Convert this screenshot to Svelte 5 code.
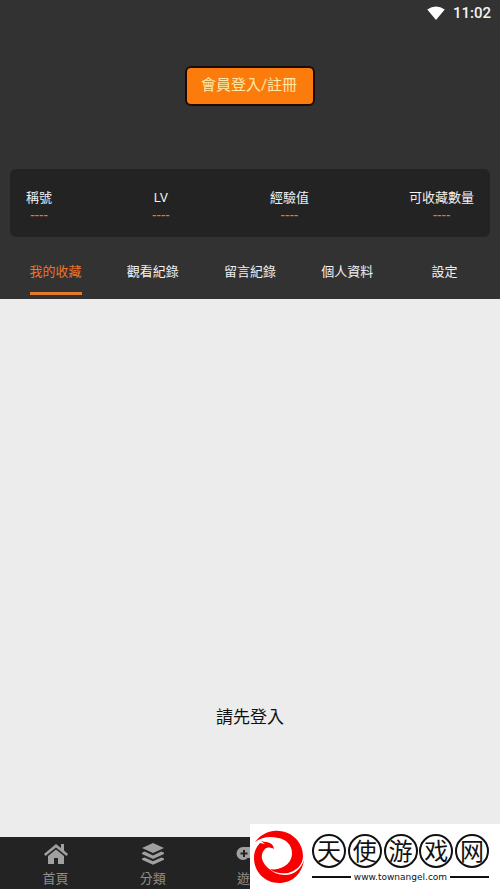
<script>
  const stats = ['稱號', 'LV', '經驗值', '可收藏數量'];
  const tabs = ['我的收藏', '觀看紀錄', '留言紀錄', '個人資料', '設定'];
  const nav = [
    { id: 'home', label: '首頁' },
    { id: 'category', label: '分類' },
    { id: 'game', label: '遊戲' },
  ];
  const brand = ['天', '使', '游', '戏', '网'];

  let active = $state('我的收藏');
</script>

<div class="page">
  <header class="top">
    <div class="status">
      <svg class="wifi" viewBox="0 0 20 16" aria-hidden="true">
        <path d="M0 4Q10-3 20 4L10 16Z" fill="#fff" />
      </svg>
      <span>11:02</span>
    </div>

    <button class="login" type="button">會員登入/註冊</button>

    <dl class="stats">
      {#each stats as stat}
        <div class="stat">
          <dt>{stat}</dt>
          <dd>----</dd>
        </div>
      {/each}
    </dl>

    <div class="tabs">
      {#each tabs as tab}
        <button class="tab" class:active={active === tab} type="button" onclick={() => (active = tab)}>
          <span>{tab}</span>
        </button>
      {/each}
    </div>
  </header>

  <main class="content">
    <p>請先登入</p>
  </main>

  <nav class="bottom-nav">
    {#each nav as item}
      <a class="nav-item" href="#{item.id}">
        <svg viewBox="0 0 24 22" aria-hidden="true">
          {#if item.id === 'home'}
            <path d="M12 1 0 11l1.500 2L12 4.500 22.500 13l1.500-2-4-3.400V1h-3v4.100Z" />
            <path d="M12 6.500 4 13v8h6v-6h4v6h6v-8Z" />
          {:else if item.id === 'category'}
            <path d="M12 0 1 5l11 5 11-5Z" />
            <path d="m1 9.800 2.600-1.200L12 12.400l8.400-3.800L23 9.800v1.200l-11 5-11-5Z" />
            <path d="m1 15.600 2.600-1.200L12 18.200l8.400-3.800 2.600 1.200v1.200l-11 5-11-5Z" />
          {:else}
            <path
              fill-rule="evenodd"
              d="M5 4h14a6.500 6.500 0 0 1 0 13q-3 0-4.500-2h-5Q8 17 5 17A6.500 6.500 0 0 1 5 4ZM5 7v2.500H2.500v2H5V14h2v-2.500h2.500v-2H7V7Zm10 4v3h3v-3Zm3-4v3h3V7Z"
            />
          {/if}
        </svg>
        <span>{item.label}</span>
      </a>
    {/each}
  </nav>

  <aside class="brand">
    <svg class="brand-logo" viewBox="0 0 50 54" aria-hidden="true">
      <g fill="#f80000">
        <path d="M1 12C8 3 17 0 25 1c14 1 24 12 24 25 0 9-7 15-15 17-7 1-14 0-18-4 4 1 9 0 13-2 6-3 9-8 9-14 0-8-6-14-14-15C16 6 8 7 1 12Z" />
        <path d="M6 13c-4 4-6 9-6 15 0 14 11 25 25 25 13 0 23-9 25-23-3 9-10 15-19 15-7 0-13-3-18-8-6-6-7-13-2-18 2-2 5-2 9 0-1-5-4-7-9-7l-4-1 4 3Z" />
      </g>
    </svg>
    <div class="brand-text">
      <div class="brand-name">
        {#each brand as char}
          <span>{char}</span>
        {/each}
      </div>
      <div class="brand-url">www.townangel.com</div>
    </div>
  </aside>
</div>

<style>
  :global(body) {
    margin: 0;
    font-family: Roboto, "Noto Sans CJK TC", sans-serif;
  }

  .page {
    position: relative;
    display: flex;
    flex-direction: column;
    min-height: 100vh;
    overflow: hidden;
    background: #ececec;
  }

  .top {
    display: flex;
    flex-direction: column;
    background: #323232;
    color: #f0f0f0;
  }

  .status {
    display: flex;
    align-items: center;
    justify-content: flex-end;
    gap: 8px;
    height: 26px;
    padding-right: 9px;
    font-size: 15px;
    font-weight: 500;
    color: #f4f4f4;
  }

  .wifi { width: 18px; height: 14px; }

  .login {
    align-self: center;
    width: 130px;
    height: 40px;
    margin: 40px 0 63px;
    padding: 0 2px 2px 0;
    border: 2px solid #1c0c08;
    border-radius: 6px;
    background: #fb7c0c;
    color: #ffe9a8;
    font: inherit;
    font-size: 15px;
    line-height: 20px;
  }

  .stats {
    display: flex;
    justify-content: space-between;
    height: 68px;
    box-sizing: border-box;
    margin: 0 10px;
    padding: 19px 16px 0;
    border-radius: 6px;
    background: #232323;
    font-size: 13px;
  }

  .stat { text-align: center; }
  .stat dt { line-height: 20px; }

  .stat dd {
    margin: 0;
    color: #f07818;
    font-weight: 500;
    line-height: 16px;
  }

  .tabs {
    display: grid;
    grid-template-columns: repeat(5, 1fr);
    padding: 0 7px;
    margin-top: 20px;
  }

  .tab {
    display: flex;
    justify-content: center;
    padding: 0 0 4px;
    border: 0;
    background: none;
    color: inherit;
    font: inherit;
    font-size: 13px;
  }

  .tab span {
    padding-bottom: 5px;
    border-bottom: 3px solid transparent;
    line-height: 30px;
  }

  .tab.active span {
    border-color: #e27a2c;
    color: #e8762a;
  }

  .content {
    display: flex;
    flex: 1;
    align-items: flex-end;
    justify-content: center;
    padding-bottom: 108px;
    color: #111;
  }

  .content p {
    margin: 0;
    font-size: 17px;
    line-height: 24px;
  }

  .bottom-nav {
    display: grid;
    grid-template-columns: repeat(5, 1fr);
    height: 52px;
    padding: 0 7px;
    background: #232323;
  }

  .nav-item {
    display: flex;
    flex-direction: column;
    align-items: center;
    gap: 4px;
    padding-top: 6px;
    color: #8f8f8f;
    font-size: 13px;
    line-height: 20px;
    text-decoration: none;
  }

  .nav-item svg {
    width: 24px;
    height: 22px;
    overflow: visible;
    fill: #a0a0a0;
  }

  .brand {
    position: absolute;
    right: 0;
    bottom: 0;
    display: flex;
    gap: 8px;
    box-sizing: border-box;
    width: 50%;
    height: 65px;
    padding: 6px 11px 0 4px;
    background: #fff;
    color: #111;
  }

  .brand-logo { flex: none; width: 50px; height: 54px; }
  .brand-text { flex: 1; }

  .brand-name {
    display: flex;
    justify-content: space-between;
    padding-top: 4px;
    font-family: "Noto Sans CJK SC", sans-serif;
    font-size: 24px;
  }

  .brand-name span {
    display: flex;
    align-items: center;
    justify-content: center;
    box-sizing: border-box;
    width: 34px;
    height: 34px;
    border: 2px solid #111;
    border-radius: 50%;
    line-height: 28px;
    padding-bottom: 2px;
  }

  .brand-url {
    display: flex;
    align-items: center;
    gap: 3px;
    margin-top: 2px;
    font-family: "DejaVu Sans", sans-serif;
    font-size: 9px;
    line-height: 14px;
  }

  .brand-url::before,
  .brand-url::after {
    content: '';
    flex: 1;
    height: 2px;
    background: #111;
  }
</style>
